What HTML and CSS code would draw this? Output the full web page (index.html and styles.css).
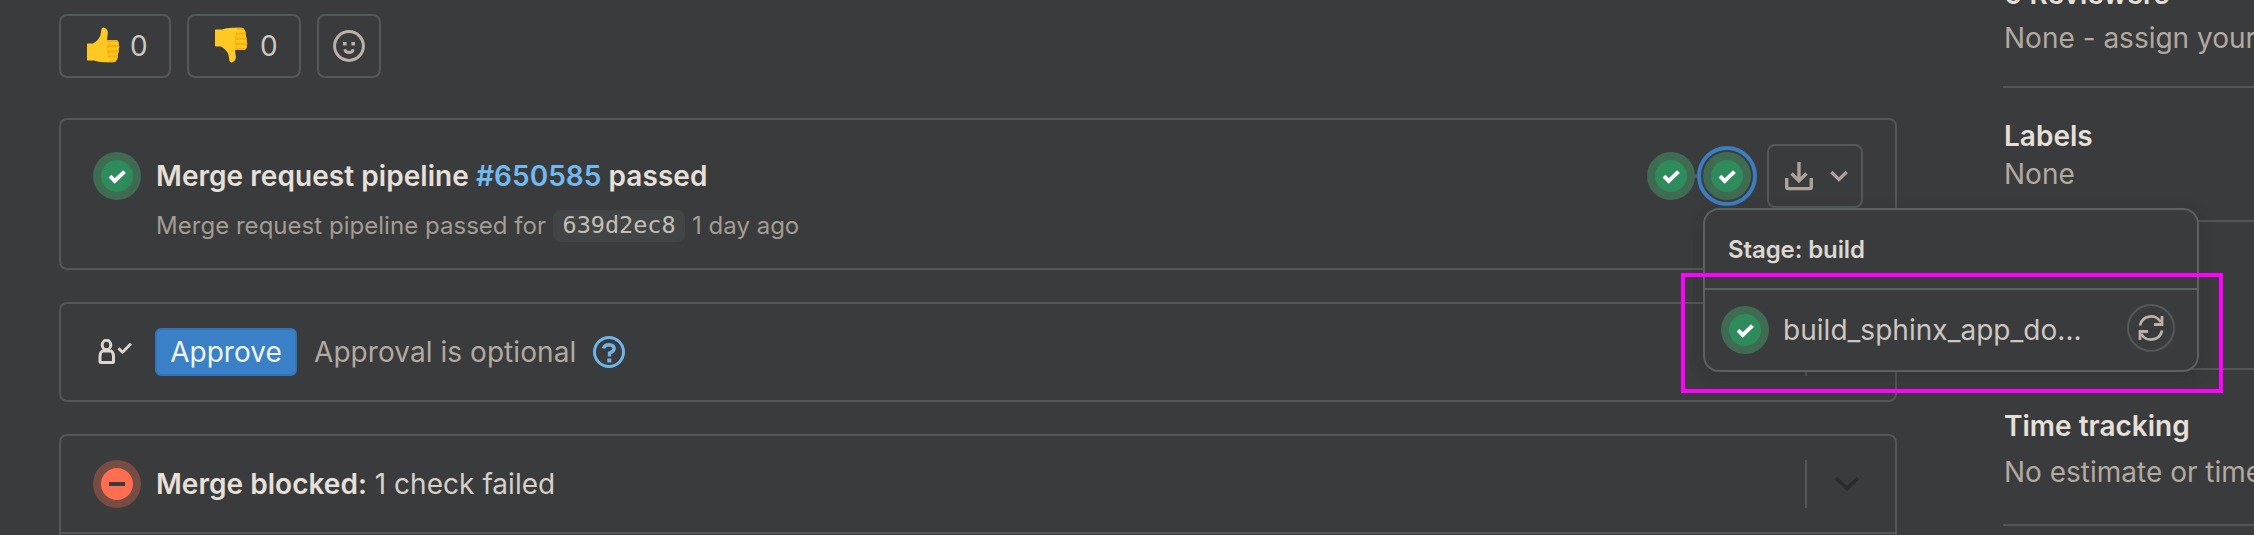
FILE: index.html
```html
<!DOCTYPE html>
<html lang="en">
<head>
<meta charset="utf-8">
<title>Merge request</title>
<link rel="stylesheet" href="styles.css">
</head>
<body>
<svg class="defs" width="0" height="0">
  <symbol id="success" viewBox="0 0 48 48"><circle cx="24" cy="24" r="24" fill="#406b53"/><circle cx="24" cy="24" r="16" fill="#2e8b5b"/><path d="M17 24.200l4.700 4.700 9.800-9.300" fill="none" stroke="#fff" stroke-width="4"/></symbol>
  <symbol id="thumb" viewBox="0 0 34 36"><path d="M1 17.500Q1 16.500 2 16.500L7 16.500Q13 13 14.500 8L15.500 2Q16.500 0 18.500 .7Q23 2.500 21.500 9L21 13L30 13Q33 13.500 32.500 17Q34 19.500 32.500 22Q33.500 25 31.500 27Q32.500 31 30.500 32.500Q30.500 35 27 35.300L18 35.300Q12 35.300 8 33.500L1.500 33.500Q1 33.500 1 32.500Z" fill="#ffc924"/><path d="M21 13l9 0q3 .5 2.500 4q1.500 2.500 0 5q1 3-1 5q1 4-1 5.500q0 2.500-3.500 2.800h-6q3-1 3-3.500q-3-1-2-4.500q-2-2-.5-5q-2-3 1-5q-2-3-1.500-4.300z" fill="#fdad0c"/><path d="M24 16.500h7M23.500 21.700h7.500M24 27h6.500M24 31.800h5.500" stroke="#ffc924" stroke-width="3.200" stroke-linecap="round"/></symbol>
</svg>
<div class="page">
  <main class="main">
    <div class="awards">
      <button class="award up"><svg class="thumb" width="34" height="36"><use href="#thumb"/></svg><span>0</span></button>
      <button class="award down"><svg class="thumb" width="34" height="36"><use href="#thumb"/></svg><span>0</span></button>
      <button class="award add"><svg width="32" height="32" viewBox="0 0 16 16"><circle cx="8" cy="8" r="7.200" fill="none" stroke="#bbb1a5" stroke-width="1.500"/><path d="M5 6h1.800v1.800H5zM9.200 6H11v1.800H9.200z" fill="#bbb1a5"/><path d="M5.900 9.600c.3 2.200 3.900 2.200 4.200 0" fill="none" stroke="#bbb1a5" stroke-width="1.400"/></svg></button>
    </div>

    <section class="card pipeline">
      <svg class="status" width="48" height="48"><use href="#success"/></svg>
      <div class="info">
        <div class="title">Merge request pipeline <a class="link">#650585</a> passed</div>
        <div class="sub"><span class="subtext">Merge request pipeline passed for</span><code class="sha">639d2ec8</code><span class="ago">1 day ago</span></div>
      </div>
      <div class="actions">
        <svg class="status" width="48" height="48"><use href="#success"/></svg>
        <span class="connector"></span>
        <span class="ring"><svg class="status" width="48" height="48"><use href="#success"/></svg></span>
        <button class="download">
          <svg width="30" height="30" viewBox="0 0 30 30" fill="none" stroke="#aca297" stroke-width="3.400"><path d="M15 1v18M7.500 12.500l7.500 7.300 7.500-7.300M2.700 17v9q0 1.600 1.600 1.600h21.400q1.600 0 1.600-1.600v-9"/></svg>
          <svg width="18" height="12" viewBox="0 0 18 12" fill="none" stroke="#aca297" stroke-width="3.200"><path d="M1.300 2l7.700 7.500L16.700 2"/></svg>
        </button>
      </div>
    </section>

    <section class="card approval">
      <svg class="approver" width="35" height="26" viewBox="0 0 35 26" fill="none" stroke="#dcd7d0" stroke-width="3"><ellipse cx="8.500" cy="6" rx="4.300" ry="4.700"/><path d="M5 11.500c-2 1-3 3-3 6v5q0 1 1 1h11.500q1 0 1-1v-5c0-3-1-5-3-6M4.500 12h8M20.500 9.200l4 4 8.500-8.500"/></svg>
      <button class="approve">Approve</button>
      <span class="optional">Approval is optional</span>
      <svg width="32" height="32" viewBox="0 0 32 32" fill="none" stroke="#6fb5ea" stroke-width="3"><circle cx="16" cy="16" r="14.500"/><path d="M10.500 12.500Q11.500 8.700 16 8.700q5 .2 5.200 4Q21 15.500 16.500 17v3.500" stroke-width="3.400"/><path d="M16.300 22.500v4" stroke-width="4"/></svg>
      <span class="split"></span>
    </section>

    <section class="card blocked">
      <div class="blocked-row">
        <svg class="status" width="48" height="48" viewBox="0 0 48 48"><circle cx="24" cy="24" r="24" fill="#774c43"/><circle cx="24" cy="24" r="16" fill="#ff6e50"/><path d="M16 24h16" stroke="#3a3a3c" stroke-width="4"/></svg>
        <div class="reason"><b>Merge blocked:</b> <span class="failed">1 check failed</span></div>
        <span class="split"></span>
        <svg class="chev" width="26" height="16" viewBox="0 0 26 16" fill="none" stroke="#2b2b2a" stroke-width="3.600"><path d="M2 2l11 10.500L24 2"/></svg>
      </div>
    </section>

    <div class="popover">
      <div class="pop-head">Stage: build</div>
      <div class="pop-item">
        <svg class="status" width="48" height="48"><use href="#success"/></svg>
        <span class="job">build_sphinx_app_do...</span>
        <button class="retry"><svg width="26" height="26" viewBox="0 0 26 26" fill="none" stroke="#bbb1a5" stroke-width="2.800"><path d="M2 10.500C4 0 18.500-1.500 22.500 7M24 15.500C22 26 7.500 27.500 3.500 19M24 1v8.500h-8M2 25v-8.500h8"/></svg></button>
      </div>
    </div>
    <div class="highlight"></div>
  </main>

  <aside class="side">
    <div class="block reviewers"><div class="name">0 Reviewers</div><div class="value">None - assign yourself</div></div>
    <div class="block labels"><div class="name">Labels</div><div class="value">None</div></div>
    <div class="block covered"></div>
    <div class="block tracking"><div class="name">Time tracking</div><div class="value">No estimate or time spent</div></div>
  </aside>
</div>
</body>
</html>
```
FILE: styles.css
```css
* { box-sizing: border-box; }
body {
  margin: 0;
  height: 535px;
  overflow: hidden;
  background: #3a3b3d;
  color: #e6e0d9;
  font: 28px/40px Inter, "Liberation Sans", sans-serif;
}
button { font: inherit; color: inherit; background: none; padding: 0; margin: 0; }
svg { flex: none; display: block; }
.defs { position: absolute; }
.page { display: flex; height: 535px; overflow: hidden; white-space: nowrap; }
.main { width: 1838px; margin-left: 59px; flex: none; }

.awards { display: flex; gap: 16px; padding-top: 14px; height: 118px; }
.award {
  height: 64px;
  border: 2px solid #535858;
  border-radius: 8px;
  display: flex;
  align-items: center;
  color: #cdc7c1;
}
.up { width: 112px; padding-left: 25px; gap: 10px; }
.down { width: 114px; padding-left: 25px; gap: 12px; }
.add { width: 64px; justify-content: center; }
.thumb { position: relative; top: -1px; }
.down .thumb { transform: scaleY(-1); }

.card { border: 2px solid #545657; border-radius: 8px; margin-bottom: 32px; display: flex; }
.pipeline { height: 152px; padding: 32px 32px 0; }
.info { padding: 4px 0 0 15px; flex: 1; }
.title { font-weight: 600; letter-spacing: .05px; }
.link { color: #72b9f0; }
.sub { display: flex; align-items: center; margin-top: 10px; font-size: 24px; color: #a59c91; }
.subtext { letter-spacing: .03px; }
.sha {
  height: 32px;
  width: 132px;
  margin: 0 7px 0 7px;
  text-align: center;
  border-radius: 8px;
  background: #424546;
  color: #c4beb4;
  font: 23.5px/31px "DejaVu Sans Mono", monospace;
}
.actions { display: flex; height: 48px; align-items: center; }
.connector { width: 2px; height: 4px; background: #545a5b; }
.ring { width: 60px; height: 60px; border: 4px solid #3b7dc0; border-radius: 50%; padding: 2px; }
.download {
  width: 96px;
  height: 64px;
  margin-left: 10px;
  border: 2px solid #535858;
  border-radius: 8px;
  display: flex;
  align-items: center;
  padding-left: 15px;
  gap: 16px;
}

.approval { height: 100px; align-items: center; padding: 0 88px 0 37px; }
.approve {
  width: 142px;
  height: 48px;
  margin-left: 22px;
  border: 2px solid #3274ba;
  border-radius: 6px;
  background: #3a80c6;
  color: #f0f4f8;
}
.optional { margin: 0 17px 0 17px; color: #b2a99f; letter-spacing: .06px; }
.split { width: 2px; height: 48px; margin-left: auto; background: #545858; }

.blocked { height: 130px; margin-bottom: 0; display: block; }
.blocked-row { display: flex; align-items: center; height: 98px; padding: 0 35px 0 32px; border-bottom: 2px solid #545657; }
.reason { margin-left: 15px; letter-spacing: .03px; }
.reason b { font-weight: 600; }
.failed { color: #d6d0c9; }
.chev { margin-left: 27px; }

.popover {
  position: absolute;
  left: 1703px;
  top: 208px;
  width: 496px;
  height: 164px;
  border: 2px solid #5c6163;
  border-radius: 16px;
  background: #3a3b3d;
  box-shadow: 0 4px 16px rgba(30, 30, 30, .2);
}
.pop-head { height: 80px; padding: 22px 0 0 23px; line-height: 36px; font-size: 24px; font-weight: 600; letter-spacing: -.1px; border-bottom: 2px solid #5c6163; color: #dcd7d0; }
.pop-item { display: flex; padding: 16px 22px 0 16px; }
.job { margin-left: 14px; line-height: 48px; color: #cdc7c1; letter-spacing: .03px; }
.retry { width: 48px; height: 48px; margin: -2px 0 0 auto; border: 2px solid #535858; border-radius: 50%; display: grid; place-items: center; }
.highlight { position: absolute; left: 1681px; top: 273px; width: 542px; height: 120px; border: 4px solid #f0f; }

.side { flex: none; width: 251px; margin-left: 106px; line-height: 36px; }
.block { border-bottom: 2px solid #535657; }
.name, .value { padding-left: 1px; }
.name { font-weight: 600; }
.value { color: #b2a99f; }
.reviewers { margin-top: -24px; height: 112px; }
.reviewers .value { padding-top: 8px; }
.labels { height: 134px; padding-top: 30px; }
.labels .value { padding-top: 2px; }
.covered { height: 148px; }
.tracking { height: 156px; padding-top: 38px; }
.tracking .value { padding-top: 10px; }
```
